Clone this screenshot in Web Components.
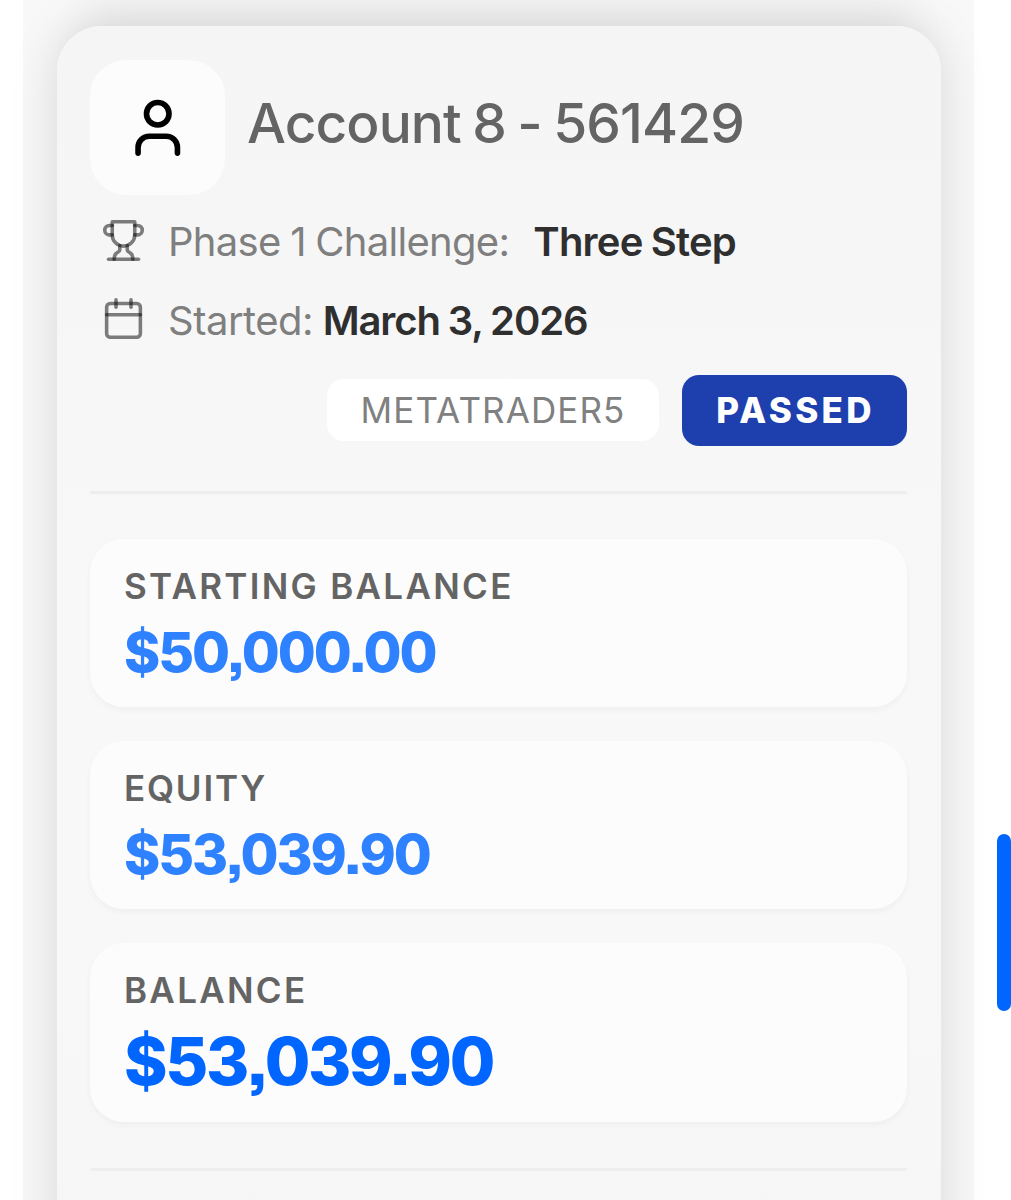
<!DOCTYPE html>
<html lang="en">
<head>
<meta charset="utf-8">
<title>Account</title>
<style>
  html,body{
    margin:0;
    height:1200px;
    overflow:hidden;
    background:#fff;
    font-family:Inter,"Liberation Sans",sans-serif;
  }
</style>
</head>
<body>
<account-page>
  <account-card>
    <account-title slot="title">Account 8 - 561429</account-title>
    <info-row icon="trophy" style="--label-spacing:-.7px;--value-spacing:-.8px;--value-gap:24px">Phase 1 Challenge:<span slot="value">Three Step</span></info-row>
    <info-row icon="calendar" style="--label-spacing:-.5px;--value-spacing:-1.1px;--value-gap:9.5px">Started:<span slot="value">March 3, 2026</span></info-row>
    <tag-badge slot="tags">METATRADER5</tag-badge>
    <tag-badge slot="tags" kind="passed">PASSED</tag-badge>
    <stat-box slot="stats" label="STARTING BALANCE">$50,000.00</stat-box>
    <stat-box slot="stats" label="EQUITY" style="--label-spacing:1.8px">$53,039.90</stat-box>
    <stat-box slot="stats" label="BALANCE" large>$53,039.90</stat-box>
  </account-card>
</account-page>
<script>
const icons={
  user:`<path d="M19 21v-2a4 4 0 0 0-4-4H9a4 4 0 0 0-4 4v2"/><circle cx="12" cy="7" r="4"/>`,
  trophy:`
    <path d="M6 9H4.5a2.5 2.5 0 0 1 0-5H6"/>
    <path d="M18 9h1.5a2.5 2.5 0 0 0 0-5H18"/>
    <path d="M4 22h16"/>
    <path d="M10 14.66V17c0 .55-.47.98-.97 1.21C7.85 18.75 7 20.24 7 22"/>
    <path d="M14 14.66V17c0 .55.47.98.97 1.21C16.15 18.75 17 20.24 17 22"/>
    <path d="M18 2H6v7a6 6 0 0 0 12 0V2Z"/>`,
  calendar:`
    <path d="M8 2v4"/><path d="M16 2v4"/>
    <rect width="18" height="18" x="3" y="4" rx="2"/>
    <path d="M3 10h18"/>`
};

class BaseElement extends HTMLElement{
  constructor(){
    super();
    this.attachShadow({mode:'open'});
  }
  connectedCallback(){
    this.shadowRoot.innerHTML=this.render();
  }
}

class LineIcon extends BaseElement{
  render(){
    return `
      <style>
        :host{display:block;flex:none;width:45px;height:45px}
        svg{display:block;width:100%;height:100%}
      </style>
      <svg viewBox="0 0 24 24" fill="none" stroke="currentColor" stroke-width="${this.getAttribute('weight')||2}" stroke-linecap="round" stroke-linejoin="round">${icons[this.getAttribute('name')]}</svg>
    `;
  }
}

class AccountPage extends BaseElement{
  render(){
    return `
      <style>
        :host{
          display:block;
          position:relative;
          height:1200px;
          overflow:hidden;
        }
        main{
          box-sizing:border-box;
          width:951px;
          height:1200px;
          margin-left:23px;
          padding:26px 33px 0 34px;
          background:#f8f8f8;
        }
        .handle{
          position:absolute;
          right:0;
          top:834px;
          width:14px;
          height:177px;
          border-radius:7px;
          background:#06f;
        }
      </style>
      <main><slot></slot></main>
      <div class="handle"></div>
    `;
  }
}

class AccountCard extends BaseElement{
  render(){
    return `
      <style>
        :host{
          box-sizing:border-box;
          display:block;
          height:1260px;
          padding:34px 34px 0 33px;
          border-radius:45px;
          background:linear-gradient(#f5f5f5,#f8f8f8 45%,#f8f8f8 75%,#f6f6f6);
          box-shadow:0 0 48px rgba(0,0,0,.135),0 -56px 44px -26px rgba(0,0,0,.035);
        }
        .rows{
          display:flex;
          flex-direction:column;
          gap:22.5px;
          padding:17px 0 0 11px;
        }
        .tags{
          display:flex;
          align-items:center;
          justify-content:flex-end;
          gap:23px;
          padding:28px 0 45px;
        }
        .line{
          height:3px;
          background:#eee;
        }
        .stats{
          display:flex;
          flex-direction:column;
          gap:34px;
          padding:45px 0 46px;
        }
      </style>
      <slot name="title"></slot>
      <div class="rows"><slot></slot></div>
      <div class="tags"><slot name="tags"></slot></div>
      <div class="line"></div>
      <div class="stats"><slot name="stats"></slot></div>
      <div class="line"></div>
    `;
  }
}

class AccountTitle extends BaseElement{
  render(){
    return `
      <style>
        :host{
          display:flex;
          align-items:center;
          gap:22px;
          color:#646464;
          font-size:55px;
          font-weight:500;
          letter-spacing:-.9px;
          word-spacing:-2.4px;
          white-space:nowrap;
        }
        .tile{
          display:flex;
          align-items:center;
          justify-content:center;
          flex:none;
          width:135px;
          height:135px;
          border-radius:36px;
          background:#fcfcfc;
          color:#000;
        }
        line-icon{width:67.5px;height:67.5px}
        .name{padding-bottom:9px}
      </style>
      <div class="tile"><line-icon name="user"></line-icon></div>
      <div class="name"><slot></slot></div>
    `;
  }
}

class InfoRow extends BaseElement{
  render(){
    return `
      <style>
        :host{
          display:flex;
          align-items:center;
          height:56px;
          color:#7f7f7f;
          font-size:40px;
          word-spacing:-1px;
          white-space:nowrap;
        }
        line-icon{
          margin-right:22px;
          color:rgba(0,0,0,.5);
        }
        .label{
          padding-top:3px;
          letter-spacing:var(--label-spacing,0);
        }
        .value{
          padding-top:3px;
          margin-left:var(--value-gap,11px);
          color:#2f2f2f;
          font-weight:600;
          letter-spacing:var(--value-spacing,0);
        }
      </style>
      <line-icon name="${this.getAttribute('icon')}" weight="1.9"></line-icon>
      <div class="label"><slot></slot></div>
      <div class="value"><slot name="value"></slot></div>
    `;
  }
}

class TagBadge extends BaseElement{
  render(){
    return `
      <style>
        :host{
          box-sizing:border-box;
          display:flex;
          align-items:center;
          justify-content:center;
          width:332px;
          height:62px;
          border-radius:17px;
          background:#fff;
          color:#808080;
          font-size:35px;
          letter-spacing:1.1px;
        }
        :host([kind=passed]){
          width:225px;
          height:71px;
          background:#1e40af;
          color:#fff;
          font-weight:800;
          letter-spacing:3.3px;
          padding-left:2px;
          padding-bottom:1px;
        }
      </style>
      <slot></slot>
    `;
  }
}

class StatBox extends BaseElement{
  render(){
    return `
      <style>
        :host{
          box-sizing:border-box;
          display:flex;
          flex-direction:column;
          gap:9px;
          height:168px;
          padding:23.5px 34px 22px;
          border-radius:34px;
          background:#fcfcfc;
          box-shadow:0 3px 6px rgba(0,0,0,.04);
          white-space:nowrap;
        }
        .label{
          color:#646464;
          font-size:35px;
          line-height:48px;
          font-weight:600;
          letter-spacing:var(--label-spacing,2.3px);
        }
        .amount{
          color:#2f82ff;
          font-size:55px;
          line-height:66px;
          font-weight:800;
          letter-spacing:-2.1px;
          font-feature-settings:"ss07";
        }
        :host([large]){height:179px}
        :host([large]) .amount{
          color:#06f;
          font-size:66px;
          line-height:77px;
          letter-spacing:-2.3px;
        }
      </style>
      <div class="label">${this.getAttribute('label')}</div>
      <div class="amount"><slot></slot></div>
    `;
  }
}

customElements.define('line-icon',LineIcon);
customElements.define('account-page',AccountPage);
customElements.define('account-card',AccountCard);
customElements.define('account-title',AccountTitle);
customElements.define('info-row',InfoRow);
customElements.define('tag-badge',TagBadge);
customElements.define('stat-box',StatBox);
</script>
</body>
</html>
